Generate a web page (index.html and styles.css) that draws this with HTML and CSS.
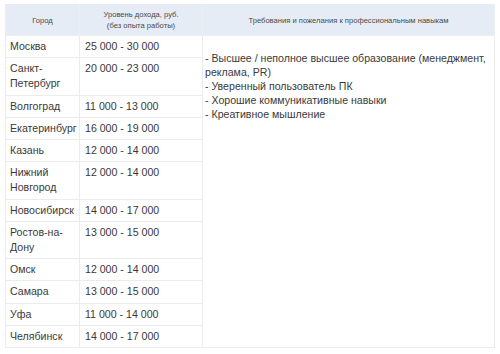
FILE: index.html
```html
<!DOCTYPE html>
<html lang="ru">
<head>
<meta charset="utf-8">
<title>Уровень дохода</title>
<link rel="stylesheet" href="styles.css">
</head>
<body>
<div class="wrap">
<table class="salary">
<colgroup>
<col class="c1"><col class="c2"><col class="c3">
</colgroup>
<thead>
<tr>
<th>Город</th>
<th>Уровень дохода, руб.<br>(без опыта работы)</th>
<th>Требования и пожелания к профессиональным навыкам</th>
</tr>
</thead>
<tbody>
<tr><td>Москва</td><td>25 000 - 30 000</td>
<td class="req" rowspan="12">- Высшее / неполное высшее образование (менеджмент, реклама, PR)<br>- Уверенный пользователь ПК<br>- Хорошие коммуникативные навыки<br>- Креативное мышление</td></tr>
<tr><td>Санкт-<br>Петербург</td><td>20 000 - 23 000</td></tr>
<tr><td>Волгоград</td><td>11 000 - 13 000</td></tr>
<tr><td>Екатеринбург</td><td>16 000 - 19 000</td></tr>
<tr><td>Казань</td><td>12 000 - 14 000</td></tr>
<tr><td>Нижний<br>Новгород</td><td>12 000 - 14 000</td></tr>
<tr><td>Новосибирск</td><td>14 000 - 17 000</td></tr>
<tr><td>Ростов-на-<br>Дону</td><td>13 000 - 15 000</td></tr>
<tr><td>Омск</td><td>12 000 - 14 000</td></tr>
<tr><td>Самара</td><td>13 000 - 15 000</td></tr>
<tr><td>Уфа</td><td>11 000 - 14 000</td></tr>
<tr><td>Челябинск</td><td>14 000 - 17 000</td></tr>
</tbody>
</table>
</div>
</body>
</html>
```
FILE: styles.css
```css
html, body {
  margin: 0;
  padding: 0;
  background: #ffffff;
}
.wrap {
  padding: 4px 0 0 5px;
}
.salary {
  border-collapse: collapse;
  table-layout: fixed;
  width: 489px;
  font-family: "Liberation Sans", Arial, sans-serif;
  font-size: 10.6px;
  color: #3a3a3a;
  border: 1px solid #ebebeb;
}
.c1 { width: 74px; }
.c2 { width: 123px; }
.c3 { width: 292px; }
.salary th {
  background: #e6ecf5;
  font-weight: normal;
  font-size: 7.6px;
  line-height: 11px;
  color: #4a4a4a;
  height: 31px;
  padding: 0 3px;
  border: 1px solid #eceef2;
  border-top: 0;
  text-align: center;
  vertical-align: middle;
  box-sizing: border-box;
}
.salary td {
  border: 1px solid #ececec;
  padding: 3px 3px 3px 4px;
  line-height: 15.2px;
  vertical-align: top;
  text-align: left;
  white-space: nowrap;
}
.salary td:nth-child(2) {
  padding-left: 5px;
}
.salary td.req {
  white-space: normal;
  line-height: 14px;
  padding: 15px 3px 0 2px;
}
```
